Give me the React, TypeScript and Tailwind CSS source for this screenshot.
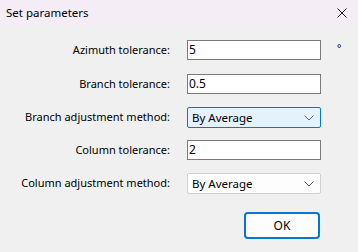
const font = { fontFamily: '"Segoe UI", "Noto Sans", sans-serif' };

function Chevron() {
  return (
    <svg width="10" height="6" viewBox="0 0 10 6" className="shrink-0">
      <path d="M0.5 0.5 L5 5 L9.5 0.5" fill="none" stroke="#606060" strokeWidth="1" />
    </svg>
  );
}

function TextBox({ value }: { value: string }) {
  return (
    <div className="w-[134px] h-[20px] border border-[#7a7a7a] bg-white flex items-center px-[1px] text-[12px] text-black leading-none">
      {value}
    </div>
  );
}

function Select({ value, focused }: { value: string; focused?: boolean }) {
  return (
    <div
      className={
        focused
          ? "w-[134px] h-[21px] rounded-[2px] border border-[#0078d7] bg-[#e5f1fb] flex items-center justify-between pl-[4px] pr-[6px] text-[11.5px] text-black leading-none"
          : "w-[134px] h-[21px] rounded-[2px] border border-[#d0d0d0] bg-[#fdfdfd] flex items-center justify-between pl-[4px] pr-[6px] text-[11.5px] text-black leading-none"
      }
    >
      <span>{value}</span>
      <Chevron />
    </div>
  );
}

function Row({ label, children }: { label: string; children: React.ReactNode }) {
  return (
    <div className="flex items-center">
      <div className="w-[171px] text-right text-[11px] text-black pr-[1px]">{label}</div>
      <div className="ml-[16px]">{children}</div>
    </div>
  );
}

export default function App() {
  return (
    <div className="w-[358px] h-[252px] bg-[#f0f0f0] flex flex-col" style={font}>
      {/* title bar */}
      <div className="h-[26px] bg-[#f5edf6] flex items-center justify-between pl-[6px] pr-[8px]">
        <span className="text-[11.5px] text-black">Set parameters</span>
        <svg width="10" height="10" viewBox="0 0 10 10" className="mr-[3px]">
          <path d="M0.5 0.5 L9.5 9.5 M9.5 0.5 L0.5 9.5" stroke="#1a1a1a" strokeWidth="1" />
        </svg>
      </div>

      <div className="flex flex-col pt-[14px]">
        <Row label="Azimuth tolerance:">
          <div className="flex items-start">
            <TextBox value="5" />
            <span className="ml-[16px] mt-[1px] text-[10px] leading-[14px] text-black">°</span>
          </div>
        </Row>
        <div className="mt-[14px]">
          <Row label="Branch tolerance:">
            <TextBox value="0.5" />
          </Row>
        </div>
        <div className="mt-[13px]">
          <Row label="Branch adjustment method:">
            <Select value="By Average" focused />
          </Row>
        </div>
        <div className="mt-[12px]">
          <Row label="Column tolerance:">
            <TextBox value="2" />
          </Row>
        </div>
        <div className="mt-[13px]">
          <Row label="Column adjustment method:">
            <Select value="By Average" />
          </Row>
        </div>
        <div className="mt-[18px] flex">
          <button className="ml-[244px] w-[76px] h-[27px] rounded-[4px] border-2 border-[#0078d4] bg-[#fdfdfd] text-[12px] text-black">
            OK
          </button>
        </div>
      </div>
    </div>
  );
}
